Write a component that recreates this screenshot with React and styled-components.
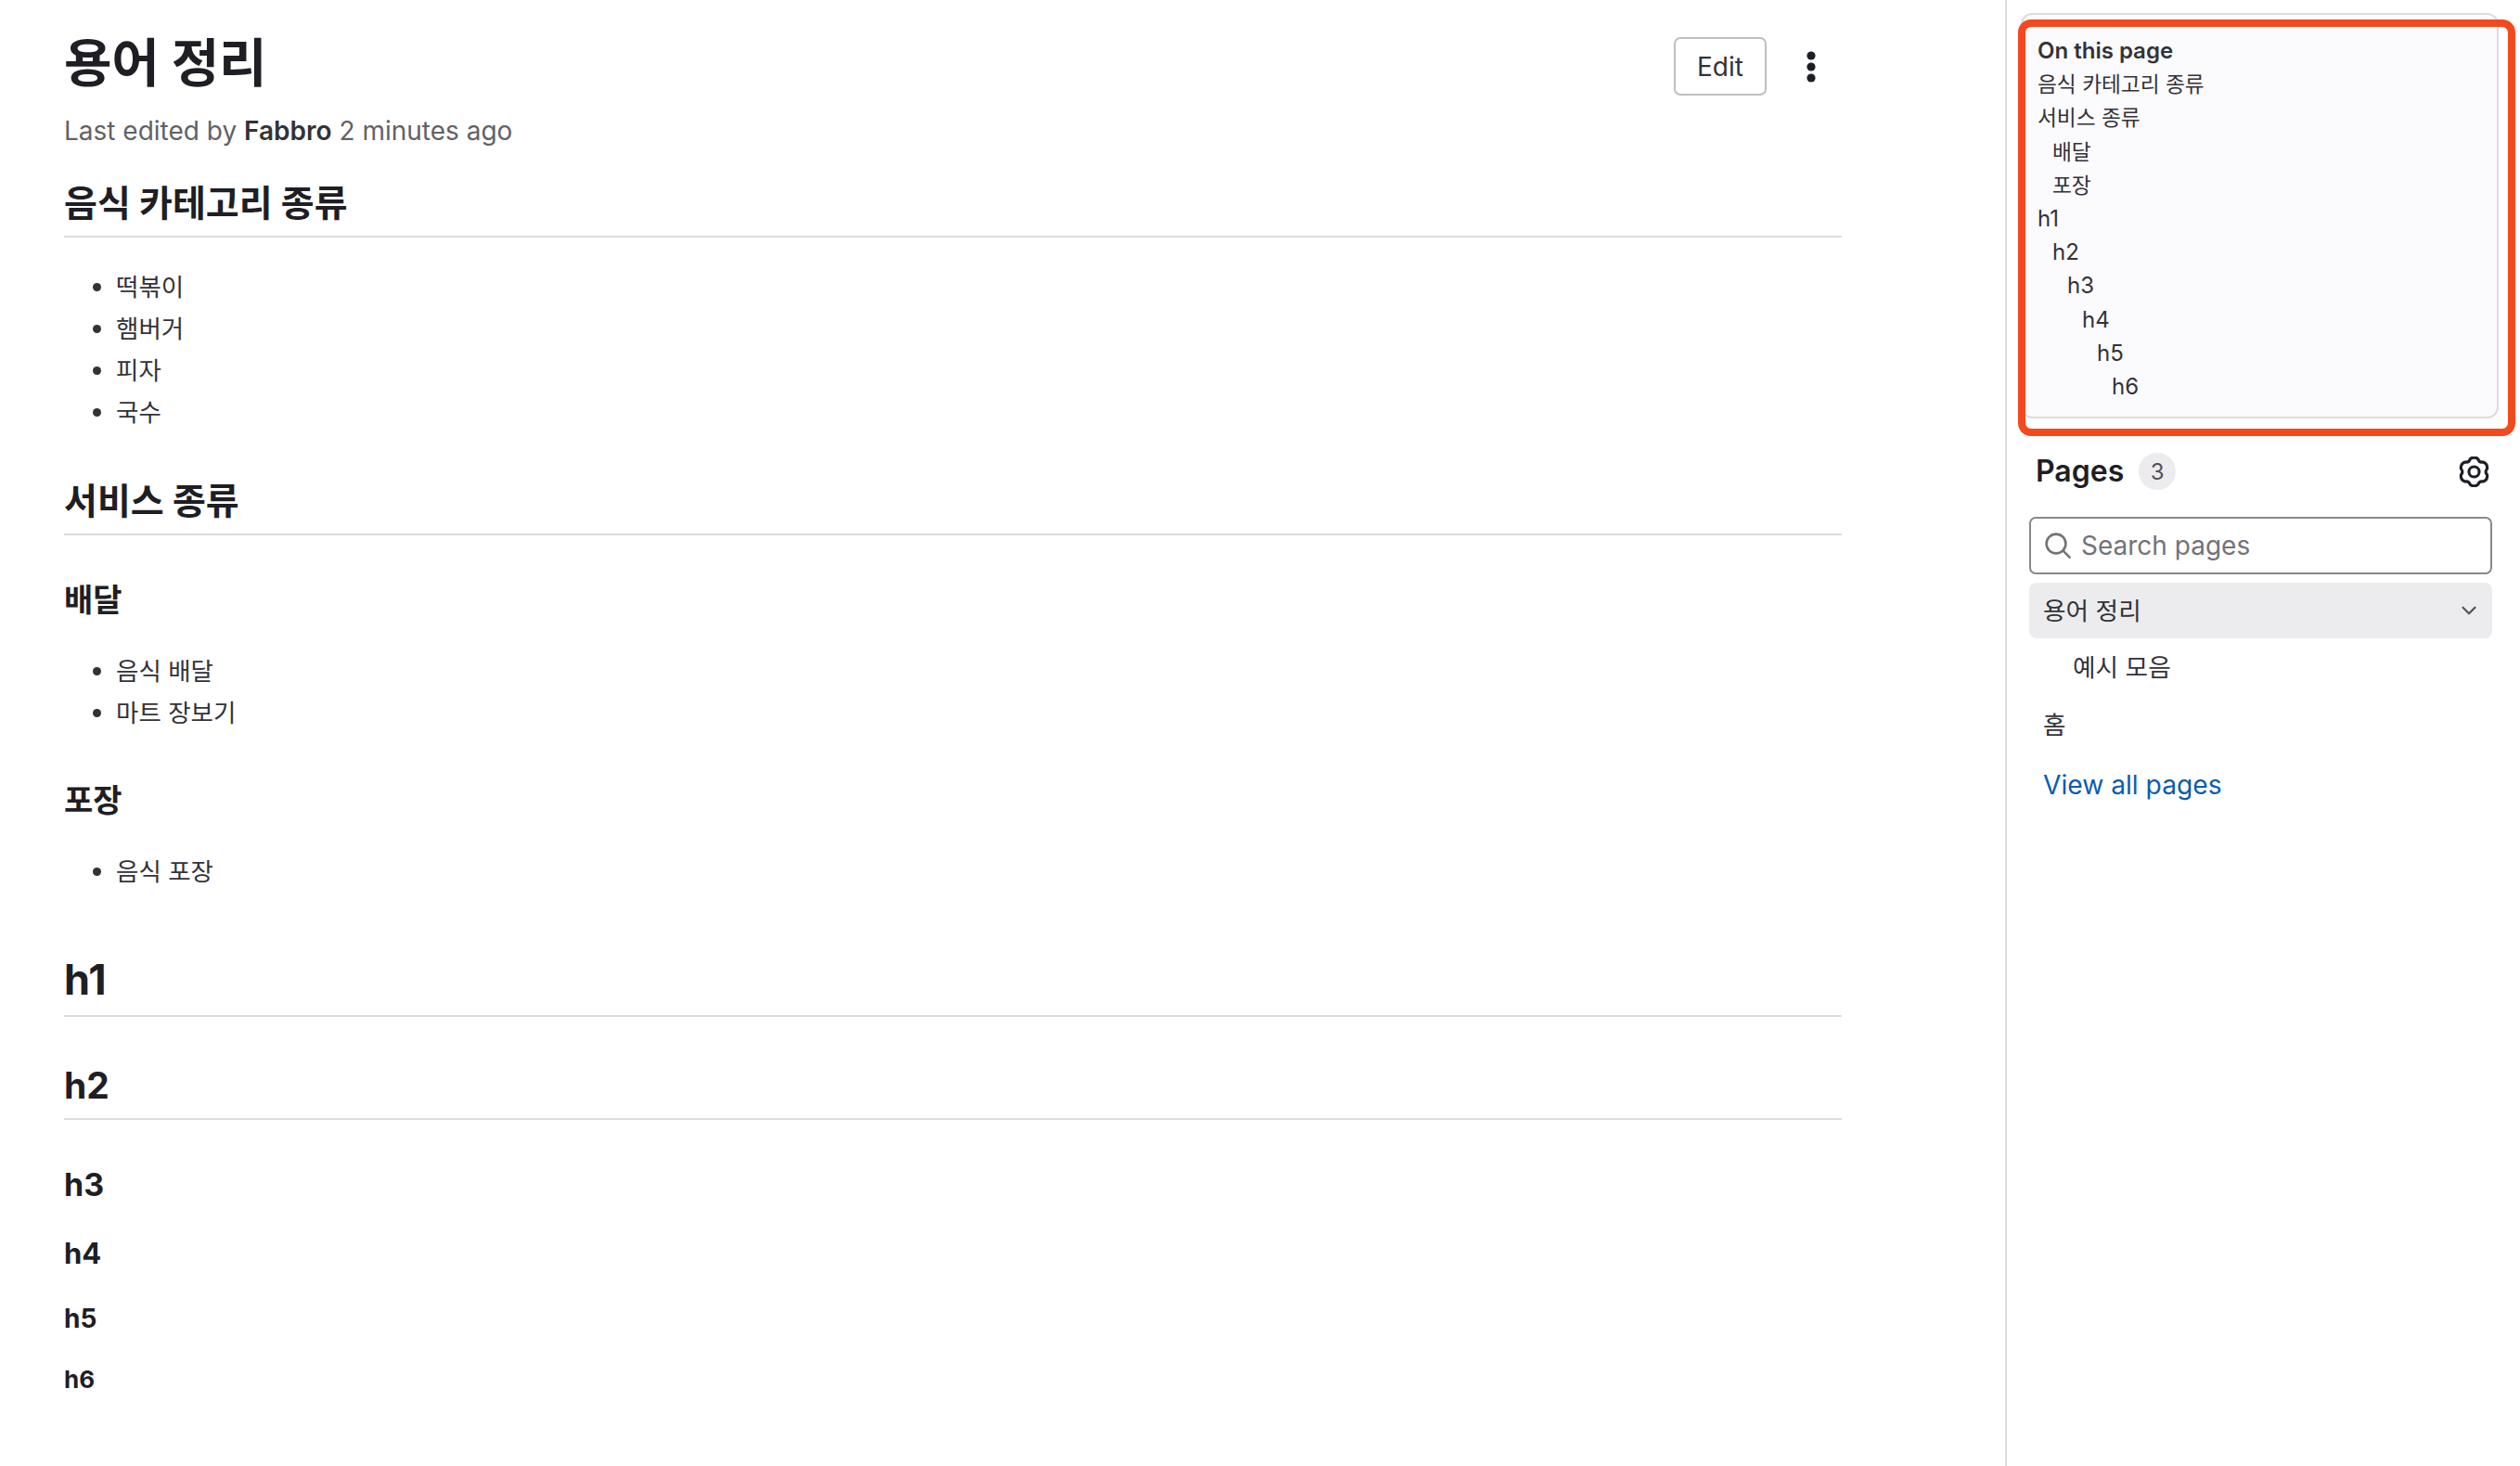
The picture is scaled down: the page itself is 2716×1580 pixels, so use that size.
import styled, { createGlobalStyle } from 'styled-components'
import { ChevronDown } from 'lucide-react'

const GlobalStyle = createGlobalStyle`
  html, body { margin: 0; padding: 0; background: #fff; }
  body {
    font-family: Inter, "Noto Sans CJK KR", sans-serif;
    color: #1f1e24;
  }
  * { box-sizing: border-box; }
`

const Page = styled.div`
  display: flex;
  width: 2716px;
  height: 1580px;
  overflow: hidden;
`

const Main = styled.main`
  width: 2161px;
  padding: 30px 176px 0 69px;
`

// 제목 줄
const TitleRow = styled.div`
  display: flex;
  justify-content: space-between;
  align-items: flex-start;
`

const Title = styled.h1`
  margin: 0;
  font-size: 56px;
  line-height: 76px;
  font-weight: 700;
  letter-spacing: -0.2px;
`

const Actions = styled.div`
  display: flex;
  align-items: center;
  gap: 39px;
  margin-top: 10px;
  margin-right: 24px;
`

const EditButton = styled.button`
  width: 100px;
  height: 63px;
  background: #fff;
  border: 2px solid #bfbfc3;
  border-radius: 7px;
  font: 400 28px Inter, sans-serif;
  color: #333238;
`

const Meta = styled.p`
  margin: 15px 0 0;
  font-size: 28px;
  line-height: 40px;
  color: #626168;

  strong {
    font-weight: 600;
    color: #333238;
  }
`

const H1 = styled.h2`
  margin: ${p => p.$top}px 0 0;
  padding-bottom: 8px;
  border-bottom: 2px solid #dcdcde;
  font-size: 45px;
  line-height: 60px;
  font-weight: 700;
`

const H2 = styled.h2`
  margin: ${p => p.$top}px 0 0;
  padding-bottom: 10px;
  border-bottom: 2px solid #dcdcde;
  font-size: 39px;
  line-height: 50px;
  font-weight: 700;
`

const H3 = styled.h3`
  margin: ${p => p.$top}px 0 0;
  font-size: 34px;
  line-height: 44px;
  font-weight: 700;
`

const H4 = styled.h4`
  margin: ${p => p.$top}px 0 0;
  font-size: 31px;
  line-height: 40px;
  font-weight: 700;
`

const H5 = styled.h5`
  margin: ${p => p.$top}px 0 0;
  font-size: 28px;
  line-height: 36px;
  font-weight: 700;
`

const H6 = styled.h6`
  margin: ${p => p.$top}px 0 0;
  font-size: 26px;
  line-height: 34px;
  font-weight: 700;
`

const List = styled.ul`
  margin: ${p => p.$top}px 0 0;
  padding-left: 56px;
  list-style: none;
  font-size: 26.5px;
  line-height: 45px;
  color: #333238;
`

// 기본 마커보다 큰 점
const Item = styled.li`
  position: relative;

  &::before {
    content: '';
    position: absolute;
    top: 18px;
    left: -25px;
    width: 9px;
    height: 9px;
    border-radius: 50%;
    background: #333238;
  }
`

const Sidebar = styled.aside`
  width: 555px;
  border-left: 2px solid #dcdcde;
  padding-top: 14px;
`

const TocWrap = styled.div`
  position: relative;
  width: 515px;
  height: 437px;
  margin-left: 15px;
`

const Toc = styled.nav`
  height: 100%;
  padding: 21px 16px 0;
  background: #fbfafd;
  border: 2px solid #dcdcde;
  border-radius: 12px;
  font-size: 24px;
  line-height: 36.2px;
  color: #333238;
`

const TocTitle = styled.div`
  font-weight: 600;
`

const TocItem = styled.div`
  padding-left: ${p => p.$level * 16}px;
  font-size: ${p => (p.$ko ? 22.7 : 24)}px;
`

// 스크린샷에 그려진 빨간 강조 표시
const Highlight = styled.div`
  position: absolute;
  top: 7px;
  left: -3px;
  right: -18px;
  bottom: -19px;
  border: 8px solid #f4491f;
  border-radius: 14px;
  pointer-events: none;
`

const PagesHeader = styled.div`
  display: flex;
  align-items: center;
  margin: 37px 33px 0 31px;
  height: 40px;
`

const PagesTitle = styled.span`
  font-size: 32px;
  line-height: 40px;
  font-weight: 600;
  color: #1f1e24;
`

const Badge = styled.span`
  display: flex;
  align-items: center;
  justify-content: center;
  width: 40px;
  height: 40px;
  margin-left: 16px;
  border-radius: 50%;
  background: #ececef;
  font-size: 24px;
  color: #535158;
`

const SettingsIcon = styled.svg`
  margin-left: auto;
  width: 33px;
  height: 33px;
  color: #1f1e24;
`

const SearchBox = styled.div`
  display: flex;
  align-items: center;
  gap: 11px;
  width: 499px;
  height: 62px;
  margin: 29px 0 0 24px;
  padding: 0 15px;
  border: 2px solid #89888d;
  border-radius: 7px;
  font-size: 28px;
  color: #737278;
`

const PageRow = styled.div`
  display: flex;
  align-items: center;
  justify-content: space-between;
  width: 499px;
  height: 60px;
  margin: ${p => p.$top ?? 9}px 0 0 24px;
  padding: 0 15px 3px;
  background: ${p => (p.$active ? '#ececef' : 'transparent')};
  border-radius: 8px;
  font-size: 26.7px;
  color: #333238;
`

const ChildRow = styled(PageRow)`
  margin-top: 1px;
  padding-left: 47px;
`

const Chevron = styled(ChevronDown)`
  margin: 3px -3px 0 0;
`

const ViewAll = styled.a`
  display: block;
  margin: 15px 0 0 39px;
  font-size: 28.2px;
  line-height: 40px;
  color: #0b5cad;
  text-decoration: none;
`

const toc = [
  ['음식 카테고리 종류', 0, true],
  ['서비스 종류', 0, true],
  ['배달', 1, true],
  ['포장', 1, true],
  ['h1', 0],
  ['h2', 1],
  ['h3', 2],
  ['h4', 3],
  ['h5', 4],
  ['h6', 5],
]

// 톱니 6개짜리 설정 아이콘 경로
function gearPath() {
  const pt = (deg, r) => {
    const a = (deg * Math.PI) / 180
    return `${(16 + r * Math.cos(a)).toFixed(2)} ${(16 + r * Math.sin(a)).toFixed(2)}`
  }
  let d = ''
  for (let k = 0; k < 6; k++) {
    const a = k * 60 - 90
    d += `${k === 0 ? 'M' : ''}${k === 0 ? pt(a - 17, 14) : ''}`
    d += `Q${pt(a, 16.6)} ${pt(a + 17, 14)}`
    d += `Q${pt(a + 30, 10.8)} ${pt(a + 43, 14)}`
  }
  return d + 'Z'
}

function App() {
  return (
    <>
      <GlobalStyle />
      <Page>
        <Main>
          <TitleRow>
            <Title>용어 정리</Title>
            <Actions>
              <EditButton>Edit</EditButton>
              <svg width="18" height="40" viewBox="0 0 18 40" fill="#1f1e24">
                <circle cx="9" cy="8" r="4.6" />
                <circle cx="9" cy="20" r="4.6" />
                <circle cx="9" cy="32" r="4.6" />
              </svg>
            </Actions>
          </TitleRow>
          <Meta>Last edited by <strong>Fabbro</strong> 2 minutes ago</Meta>

          <H2 $top={33}>음식 카테고리 종류</H2>
          <List $top={31}>
            <Item>떡볶이</Item>
            <Item>햄버거</Item>
            <Item>피자</Item>
            <Item>국수</Item>
          </List>

          <H2 $top={48}>서비스 종류</H2>
          <H3 $top={48}>배달</H3>
          <List $top={32}>
            <Item>음식 배달</Item>
            <Item>마트 장보기</Item>
          </List>
          <H3 $top={50}>포장</H3>
          <List $top={32}>
            <Item>음식 포장</Item>
          </List>

          <H1 $top={64}>h1</H1>
          <H2 $top={49}>h2</H2>
          <H3 $top={48}>h3</H3>
          <H4 $top={32}>h4</H4>
          <H5 $top={32}>h5</H5>
          <H6 $top={31}>h6</H6>
        </Main>

        <Sidebar>
          <TocWrap>
            <Toc>
              <TocTitle>On this page</TocTitle>
              {toc.map(([label, level, ko]) => (
                <TocItem key={label} $level={level} $ko={ko}>{label}</TocItem>
              ))}
            </Toc>
            <Highlight />
          </TocWrap>

          <PagesHeader>
            <PagesTitle>Pages</PagesTitle>
            <Badge>3</Badge>
            <SettingsIcon viewBox="0 0 32 32" fill="none" stroke="currentColor" strokeWidth="3" strokeLinejoin="round">
              <path d={gearPath()} />
              <circle cx="16" cy="16" r="5.4" />
            </SettingsIcon>
          </PagesHeader>

          <SearchBox>
            <svg width="28" height="28" viewBox="0 0 28 28" fill="none" stroke="#737278" strokeWidth="2.6" strokeLinecap="round">
              <circle cx="12" cy="12" r="10.4" />
              <path d="M19.6 19.6L26.6 26.6" />
            </svg>
            Search pages
          </SearchBox>

          <PageRow $active>
            용어 정리
            <Chevron size={26} color="#535158" />
          </PageRow>
          <ChildRow>예시 모음</ChildRow>
          <PageRow $top={2}>홈</PageRow>
          <ViewAll href="#">View all pages</ViewAll>
        </Sidebar>
      </Page>
    </>
  )
}

export default App
